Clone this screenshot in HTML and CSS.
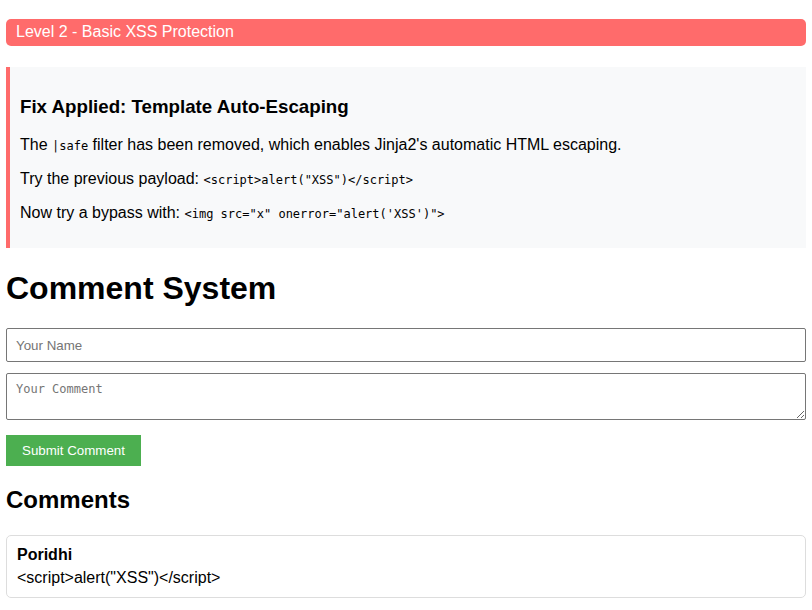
FILE: index.html
```html
<!DOCTYPE html>
<html>
<head>
<meta charset="utf-8">
<title>Level 2 - Basic XSS Protection</title>
<link rel="stylesheet" href="styles.css">
</head>
<body>
<div class="page">
  <div class="level-banner">Level 2 - Basic XSS Protection</div>
  <div class="info-box">
    <h3>Fix Applied: Template Auto-Escaping</h3>
    <p>The <code>|safe</code> filter has been removed, which enables Jinja2's automatic HTML escaping.</p>
    <p>Try the previous payload: <code>&lt;script&gt;alert("XSS")&lt;/script&gt;</code></p>
    <p>Now try a bypass with: <code>&lt;img src="x" onerror="alert('XSS')"&gt;</code></p>
  </div>
  <h1>Comment System</h1>
  <form class="comment-form">
    <input class="field" type="text" placeholder="Your Name">
    <textarea class="field area" placeholder="Your Comment"></textarea>
    <button class="submit" type="button">Submit Comment</button>
  </form>
  <h2>Comments</h2>
  <div class="comment">
    <strong class="author">Poridhi</strong>
    <div class="body">&lt;script&gt;alert("XSS")&lt;/script&gt;</div>
  </div>
</div>
</body>
</html>
```
FILE: styles.css
```css
html, body {
  margin: 0;
  padding: 0;
  background: #fff;
}
body {
  font-family: "Liberation Sans", Arial, sans-serif;
  font-size: 16px;
  color: #000;
}
.page {
  max-width: 800px;
  margin: 0 auto;
  padding-top: 19px;
}
.level-banner {
  background: #ff6b6b;
  color: #fff;
  padding: 4px 10px 5px;
  line-height: 18px;
  border-radius: 5px;
  margin-bottom: 21px;
}
.info-box {
  background: #f8f9fa;
  border-left: 4px solid #ff6b6b;
  padding: 10px;
}
.info-box h3 {
  font-size: 18.72px;
  margin: 18.72px 0;
}
.info-box p {
  margin: 16px 0;
}
code {
  font-family: "DejaVu Sans Mono", monospace;
  font-size: 12px;
}
h1 {
  font-size: 32px;
  margin: 21.44px 0;
}
.comment-form {
  display: flex;
  flex-direction: column;
  align-items: flex-start;
}
.field {
  display: block;
  width: 100%;
  box-sizing: border-box;
  padding: 8px 9px;
  border: 1px solid #767676;
  border-radius: 2px;
  font-family: "Liberation Sans", Arial, sans-serif;
  font-size: 13.33px;
  line-height: 16px;
  height: 34px;
  margin: 0 0 11px;
}
.field::placeholder {
  color: #757575;
}
.area {
  font-family: "DejaVu Sans Mono", monospace;
  font-size: 12px;
  line-height: 14.5px;
  height: 47px;
  padding: 8px 9px;
  margin-bottom: 15px;
}
.submit {
  background: #4caf50;
  color: #fff;
  border: none;
  padding: 8px 16px;
  font-family: "Liberation Sans", Arial, sans-serif;
  font-size: 13.33px;
  line-height: 15px;
  height: 31px;
}
h2 {
  font-size: 24px;
  margin: 19.92px 0;
}
.comment {
  border: 1px solid #ddd;
  border-radius: 5px;
  padding: 10px;
  margin-top: 21px;
}
.author {
  display: block;
  margin-bottom: 5px;
}
```
